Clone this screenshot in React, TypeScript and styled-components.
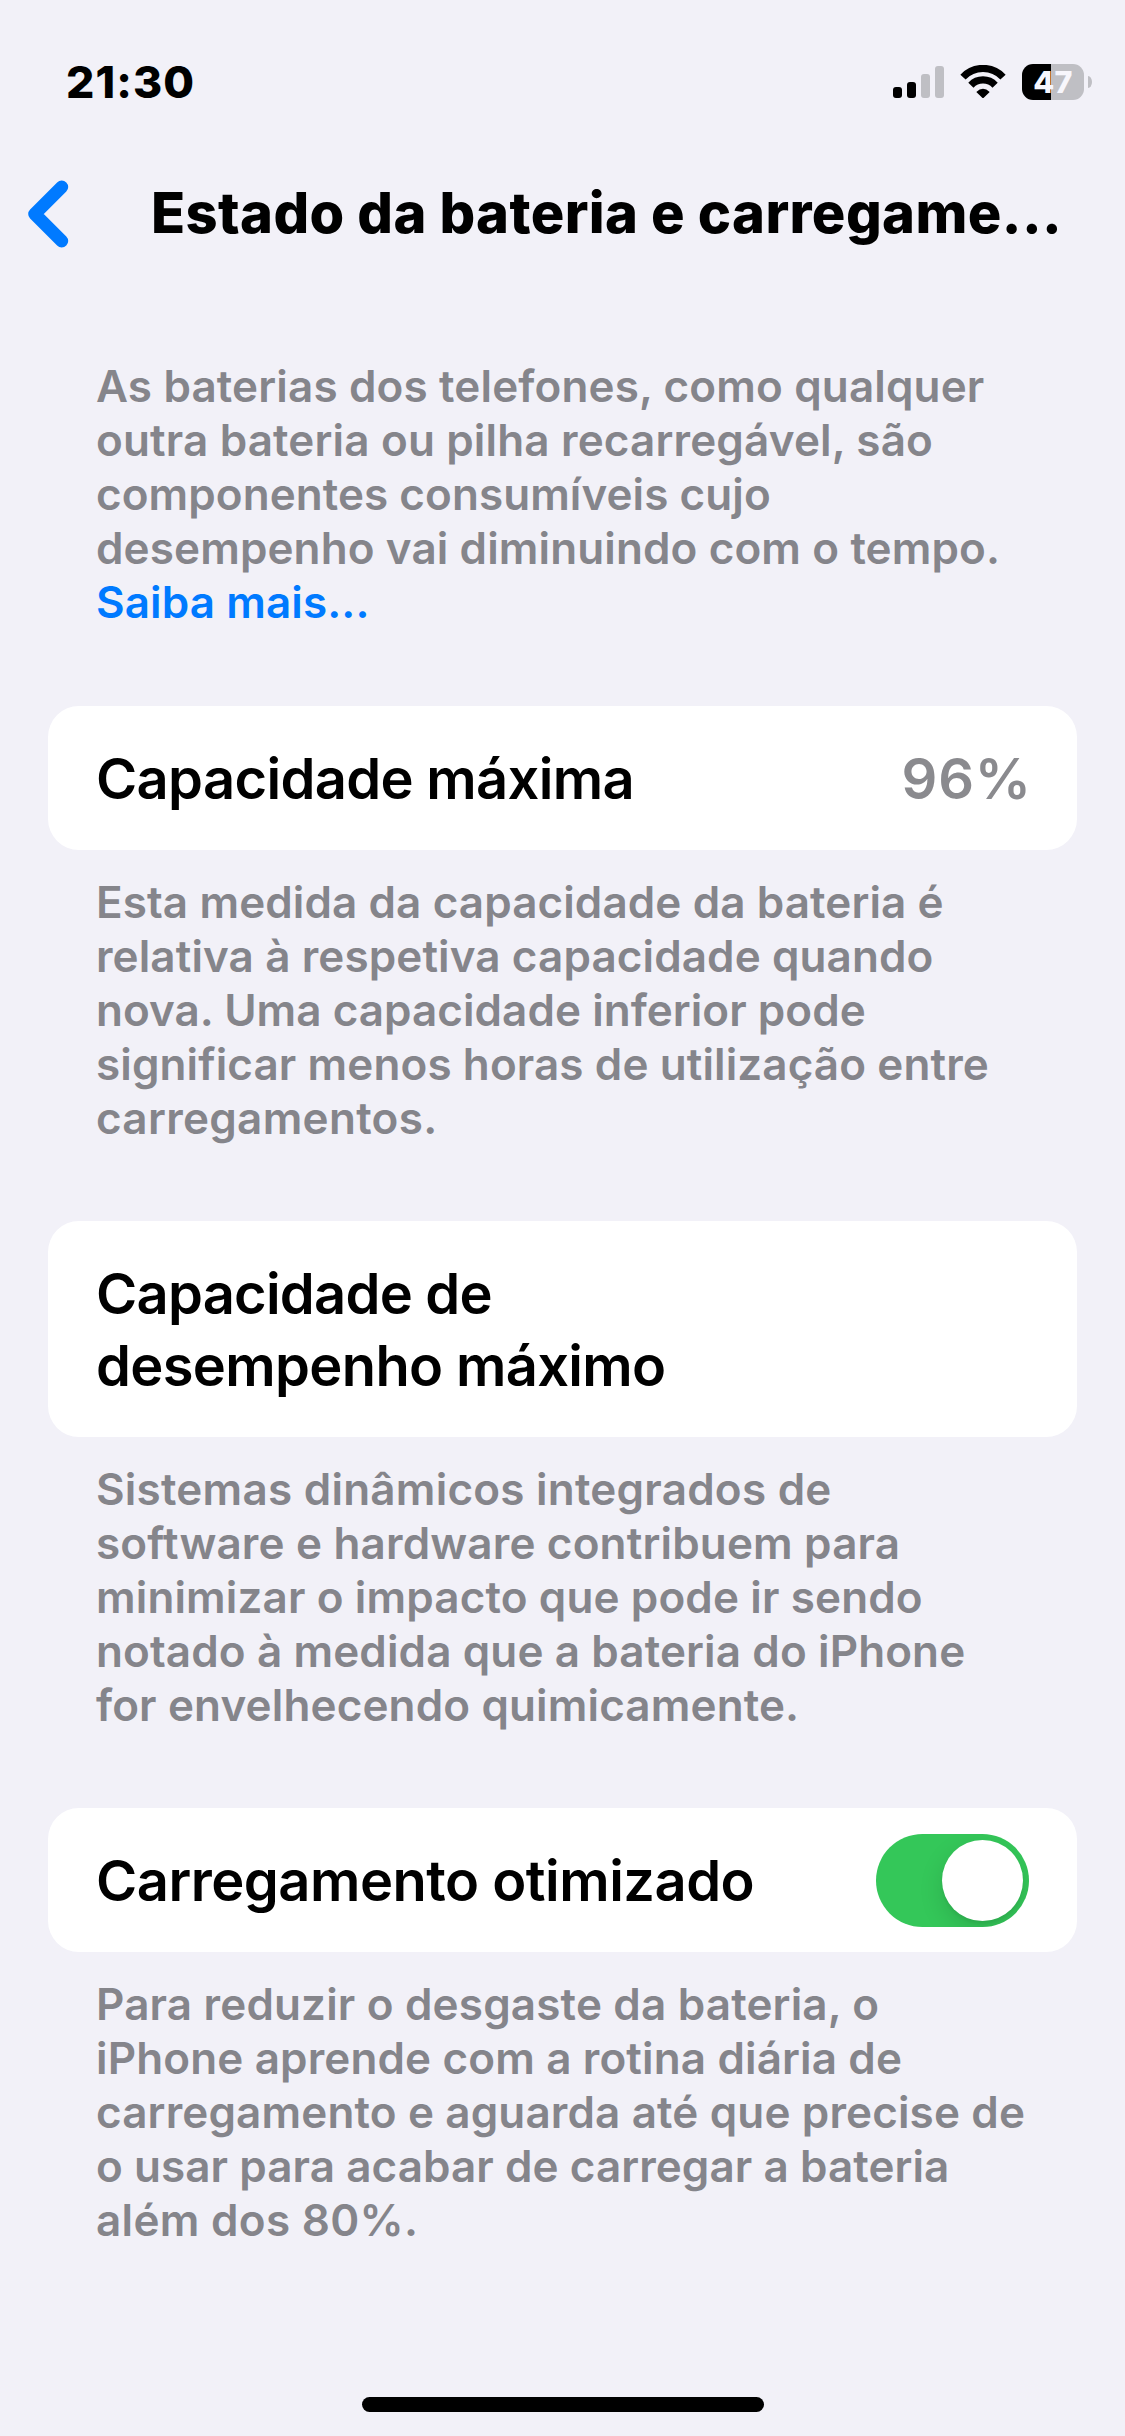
import React from 'react';
import styled, { createGlobalStyle } from 'styled-components';

const GlobalStyle = createGlobalStyle`
  * { box-sizing: border-box; }
  body { margin: 0; background: #f2f1f8; }
`;

const Screen = styled.main`
  display: flex;
  flex-direction: column;
  width: 1125px;
  height: 2436px;
  background: #f2f1f8;
  font-family: Inter, 'Liberation Sans', sans-serif;
  color: #000;
`;

const StatusBar = styled.header`
  display: flex;
  justify-content: space-between;
  height: 150px;
  padding: 55px 33px 0 66px;
`;

const Clock = styled.time`
  font-size: 44.5px;
  line-height: 54px;
  font-weight: 800;
  letter-spacing: 1.1px;
`;

const StatusIcons = styled.div`
  display: flex;
  align-items: flex-start;
  padding-top: 9px;
`;

const SignalIcon = styled.svg`
  width: 51px;
  height: 32px;
  margin: 2px 16px 0 0;
`;

const WifiIcon = styled.svg`
  width: 46px;
  height: 34px;
  margin: 1px 16px 0 0;
`;

const Battery = styled.div`
  display: flex;
  align-items: center;
  gap: 4px;
`;

const BatteryBody = styled.div<{ $level: number }>`
  display: flex;
  align-items: center;
  justify-content: center;
  width: 62px;
  height: 36px;
  border-radius: 11px;
  background: linear-gradient(to right, #000 ${p => p.$level}%, #bfbfc4 ${p => p.$level}%);
  color: #f7f6fc;
  font-size: 30.5px;
  line-height: 36px;
  font-weight: 800;
  letter-spacing: 0.4px;
`;

const BatteryTip = styled.span`
  width: 4px;
  height: 12px;
  border-radius: 0 4px 4px 0 / 0 6px 6px 0;
  background: #bfbfc4;
`;

const NavBar = styled.nav`
  display: flex;
  align-items: flex-start;
  height: 209px;
  padding: 30px 0 0 28px;
`;

const BackButton = styled.button`
  display: flex;
  flex: none;
  width: 123px;
  height: 68px;
  padding: 0;
  border: 0;
  background: none;
`;

const Title = styled.h1`
  margin: 0;
  font-size: 56px;
  line-height: 66px;
  font-weight: 800;
  letter-spacing: 0.4px;
  white-space: nowrap;
`;

const Content = styled.section`
  display: flex;
  flex-direction: column;
  padding: 0 48px;
`;

const Note = styled.p<{ $gap?: number }>`
  margin: ${p => p.$gap ?? 0}px 0 0;
  padding-left: 48px;
  color: #85858b;
  font-size: 44px;
  line-height: 54px;
  font-weight: 600;
`;

const Line = styled.span<{ $tracking: number }>`
  display: block;
  white-space: nowrap;
  letter-spacing: ${p => p.$tracking}px;
`;

const LearnMore = styled.a`
  display: block;
  color: #007aff;
  letter-spacing: 0.1px;
  text-decoration: none;
`;

const Card = styled.div<{ $gap?: number }>`
  display: flex;
  justify-content: space-between;
  margin-top: ${p => p.$gap ?? 76}px;
  padding: 37px 48px 35px;
  border-radius: 31px;
  background: #fff;
  font-size: 56px;
  line-height: 72px;
  font-weight: 600;
`;

const Value = styled.span`
  margin-right: -3px;
  color: #8a8a8e;
  letter-spacing: 0.9px;
`;

const Switch = styled.button`
  display: flex;
  justify-content: flex-end;
  width: 153px;
  height: 93px;
  margin: -11px 0 -10px;
  padding: 6px;
  overflow: hidden;
  border: 0;
  border-radius: 47px;
  background: #34c759;
`;

const Knob = styled.span`
  width: 81px;
  height: 81px;
  border-radius: 50%;
  background: #fff;
  box-shadow: 0 9px 24px rgba(0, 0, 0, 0.13), 0 3px 3px rgba(0, 0, 0, 0.05);
`;

const HomeIndicator = styled.div`
  width: 402px;
  height: 15px;
  margin: auto auto 24px;
  border-radius: 8px;
  background: #000;
`;

type TextLine = [string, number];

const intro: TextLine[] = [
  ['As baterias dos telefones, como qualquer', 0.15],
  ['outra bateria ou pilha recarregável, são', 0.16],
  ['componentes consumíveis cujo', 0.07],
  ['desempenho vai diminuindo com o tempo.', 0.12],
];

const capacityNote: TextLine[] = [
  ['Esta medida da capacidade da bateria é', 0.1],
  ['relativa à respetiva capacidade quando', 0.11],
  ['nova. Uma capacidade inferior pode', 0.05],
  ['significar menos horas de utilização entre', 0.11],
  ['carregamentos.', 0.31],
];

const performanceNote: TextLine[] = [
  ['Sistemas dinâmicos integrados de', 0.24],
  ['software e hardware contribuem para', 0.17],
  ['minimizar o impacto que pode ir sendo', 0.13],
  ['notado à medida que a bateria do iPhone', 0.12],
  ['for envelhecendo quimicamente.', 0.14],
];

const chargingNote: TextLine[] = [
  ['Para reduzir o desgaste da bateria, o', 0.17],
  ['iPhone aprende com a rotina diária de', 0.14],
  ['carregamento e aguarda até que precise de', 0.14],
  ['o usar para acabar de carregar a bateria', 0.07],
  ['além dos 80%.', 0.31],
];

function Lines({ lines }: { lines: TextLine[] }) {
  return (
    <>
      {lines.map(([text, tracking]) => (
        <Line key={text} $tracking={tracking}>{text}</Line>
      ))}
    </>
  );
}

export default function App() {
  return (
    <Screen>
      <GlobalStyle />
      <StatusBar>
        <Clock>21:30</Clock>
        <StatusIcons>
          <SignalIcon viewBox="0 0 51 32">
            <rect x="0" y="21" width="9" height="11" rx="3" />
            <rect x="14" y="16" width="9" height="16" rx="3" />
            <rect x="28" y="8" width="9" height="24" rx="3" fill="#bfbfc4" />
            <rect x="42" y="0" width="9" height="32" rx="3" fill="#bfbfc4" />
          </SignalIcon>
          <WifiIcon viewBox="0 0 46 34">
            <path d="M3 12.1A27.4 27.4 0 0 1 43 12.1" fill="none" stroke="#000" strokeWidth="7.2" />
            <path d="M10.9 20.2A16.6 16.6 0 0 1 35.1 20.2" fill="none" stroke="#000" strokeWidth="7.2" />
            <path d="M16.3 26.9Q23 20.7 29.7 26.9L24 32.5Q23 33.5 22 32.5Z" />
          </WifiIcon>
          <Battery>
            <BatteryBody $level={47}>47</BatteryBody>
            <BatteryTip />
          </Battery>
        </StatusIcons>
      </StatusBar>
      <NavBar>
        <BackButton aria-label="Voltar">
          <svg width="41" height="68" viewBox="0 0 41 68">
            <path d="M33.7 7L6.7 34L33.7 61" fill="none" stroke="#007aff" strokeWidth="13" strokeLinecap="round" strokeLinejoin="round" />
          </svg>
        </BackButton>
        <Title>Estado da bateria e carregame...</Title>
      </NavBar>
      <Content>
        <Note>
          <Lines lines={intro} />
          <LearnMore>Saiba mais...</LearnMore>
        </Note>
        <Card $gap={77}>
          <Line $tracking={-0.66}>Capacidade máxima</Line>
          <Value>96%</Value>
        </Card>
        <Note $gap={25}><Lines lines={capacityNote} /></Note>
        <Card>
          <div>
            <Line $tracking={-0.75}>Capacidade de</Line>
            <Line $tracking={-0.66}>desempenho máximo</Line>
          </div>
        </Card>
        <Note $gap={25}><Lines lines={performanceNote} /></Note>
        <Card>
          <Line $tracking={-0.5}>Carregamento otimizado</Line>
          <Switch role="switch" aria-checked="true" aria-label="Carregamento otimizado"><Knob /></Switch>
        </Card>
        <Note $gap={25}><Lines lines={chargingNote} /></Note>
      </Content>
      <HomeIndicator />
    </Screen>
  );
}
